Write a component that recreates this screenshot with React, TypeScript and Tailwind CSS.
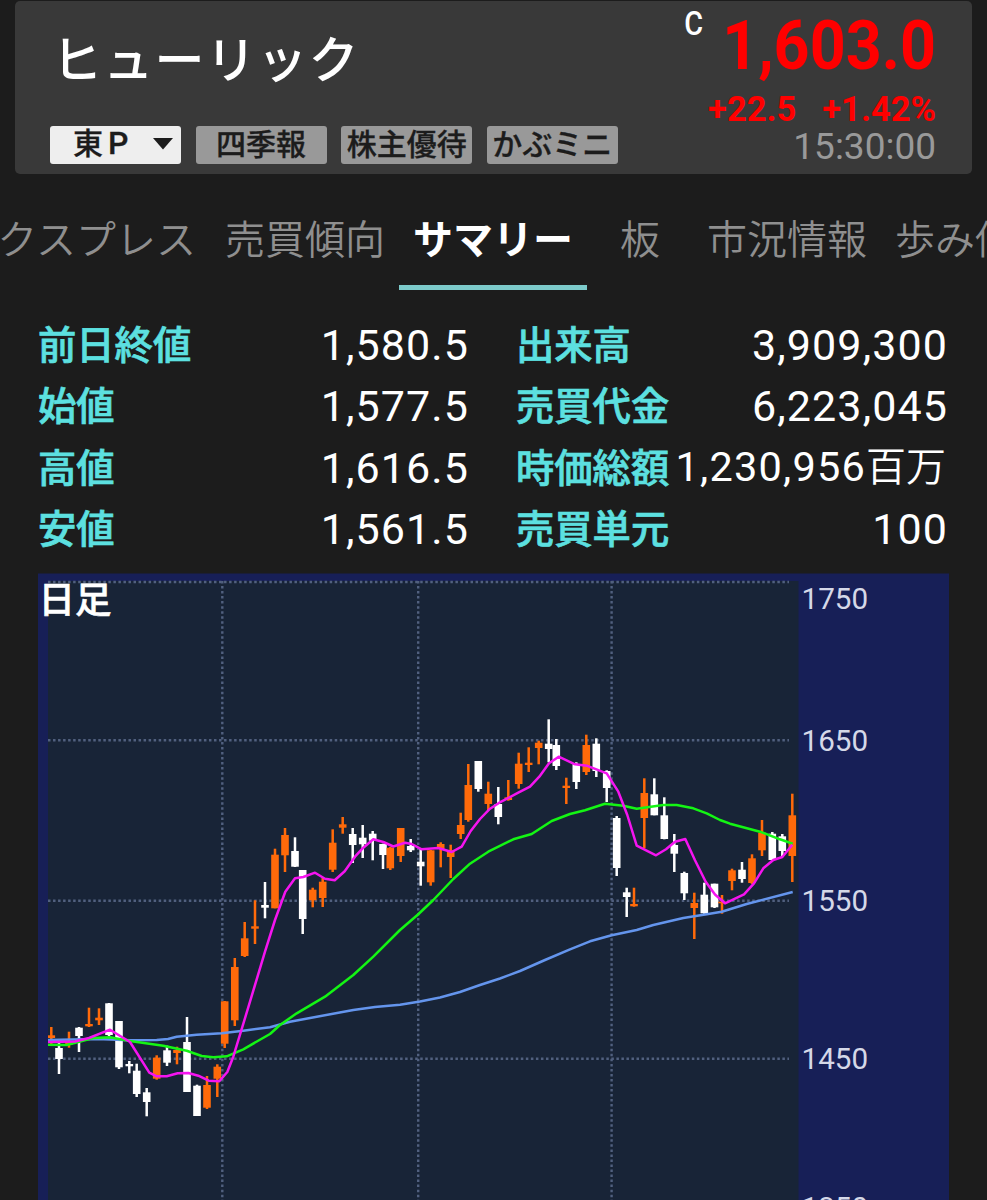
import { clsx } from "clsx";

const exchangeButtons = ["四季報", "株主優待", "かぶミニ"];

const tabs = [
  { name: "売買傾向", width: "w-[188px]" },
  { name: "サマリー", width: "w-[188px]", active: true },
  { name: "板", width: "w-[106px]" },
  { name: "市況情報", width: "w-[188px]" },
  { name: "歩み値", width: "w-[148px]" },
];

const priceRows = [
  { label: "前日終値", value: "1,580.5" },
  { label: "始値", value: "1,577.5" },
  { label: "高値", value: "1,616.5" },
  { label: "安値", value: "1,561.5" },
];

const volumeRows = [
  { label: "出来高", value: "3,909,300" },
  { label: "売買代金", value: "6,223,045" },
  { label: "時価総額", value: "1,230,956", unit: "百万" },
  { label: "売買単元", value: "100" },
];

type Candle = [x: number, high: number, low: number, top: number, bottom: number, up: 0 | 1];

const candles: Candle[] = [
  [51.3, 1027, 1046, 1035.3, 1038, 1],
  [59, 1042.3, 1074, 1048, 1059, 0],
  [69, 1031.7, 1047.7, 1042, 1044.7, 1],
  [79, 1027, 1052, 1027.7, 1036, 0],
  [89, 1007.7, 1027, 1024, 1026.3, 1],
  [99, 1008.3, 1025, 1017.7, 1020.3, 1],
  [109, 1003, 1036, 1003.3, 1035, 0],
  [119, 1021, 1069, 1021, 1067.3, 0],
  [129.3, 1061, 1073.3, 1064, 1066.3, 0],
  [136.7, 1063.7, 1097, 1070.7, 1094, 0],
  [146.7, 1088, 1116.3, 1092.3, 1102, 0],
  [156.7, 1055.3, 1079.7, 1057.7, 1078.7, 1],
  [167, 1045.7, 1066, 1050.3, 1062.7, 0],
  [177, 1046.7, 1064.3, 1050, 1053, 1],
  [187, 1017, 1092, 1042, 1092, 0],
  [197, 1084.7, 1116, 1085.7, 1116, 0],
  [207, 1076, 1109, 1085, 1107.7, 1],
  [217.3, 1064.3, 1097, 1066.7, 1078.7, 1],
  [224.7, 1001, 1048, 1001.3, 1043.7, 1],
  [234.8, 958, 1026, 967, 1020.3, 1],
  [244.7, 922, 957, 938.3, 956, 1],
  [255, 900.3, 944, 926.3, 928.7, 1],
  [265, 882, 918.3, 905, 907.7, 0],
  [275, 848.7, 908.3, 854.7, 908.3, 1],
  [285, 828, 872, 835, 855.3, 1],
  [295, 837.3, 867, 851, 866.7, 0],
  [302.7, 870, 934, 870, 919, 0],
  [312.7, 887.7, 907.3, 889.7, 900.3, 1],
  [322.7, 878, 907, 881.7, 898, 1],
  [332.7, 829.3, 872, 842.7, 869.7, 1],
  [342.7, 817, 833.7, 824.3, 827.7, 1],
  [352.7, 828, 863, 834, 845, 0],
  [362.7, 825, 858, 837.7, 844.3, 0],
  [372.7, 831, 860.3, 833.7, 840.7, 0],
  [383, 843.7, 869, 844, 855, 0],
  [390.3, 847, 870, 847.7, 868.3, 1],
  [400.7, 828, 862, 828, 856, 1],
  [410.7, 839, 852, 846, 850.3, 0],
  [420.7, 849, 885.7, 861.7, 866.3, 0],
  [430.7, 850, 885.7, 850.3, 882.3, 1],
  [440.7, 842.3, 867.3, 844, 849, 1],
  [450.7, 844.7, 878, 850.3, 857, 1],
  [460.7, 812.7, 839, 825, 834, 1],
  [468.3, 764, 821.7, 785, 820, 1],
  [478.3, 761, 791.7, 761, 789, 0],
  [488.3, 781.7, 810, 793.7, 804, 1],
  [498.3, 787, 824.3, 804, 817, 0],
  [508.3, 780, 800.7, 797.3, 800, 1],
  [518.7, 752.7, 788.7, 763.7, 784, 1],
  [528.7, 747.3, 772, 762.7, 765, 1],
  [538.7, 740.7, 764.3, 742.7, 748, 1],
  [548.7, 719.3, 762.3, 743.7, 749, 0],
  [556.3, 739, 770, 745, 766, 0],
  [566.3, 777.7, 804, 785.7, 788, 1],
  [576.3, 762.3, 789, 764.3, 782, 0],
  [586.3, 734.7, 775, 745, 772, 1],
  [596.3, 738.3, 777, 743.7, 771, 0],
  [606.7, 770.3, 802, 771, 788, 0],
  [616.7, 816, 876, 818, 868, 0],
  [626.7, 887.7, 917, 892.3, 897, 0],
  [634, 887.7, 906.7, 904, 906.3, 1],
  [644.3, 778.3, 848.3, 793, 818, 1],
  [654.3, 778.3, 815.3, 794.3, 815.3, 0],
  [664.3, 797.3, 839.3, 815.3, 839, 0],
  [674.3, 834, 872, 845, 853.7, 0],
  [684.3, 871.7, 900, 873, 893.3, 0],
  [694.3, 892.7, 939, 903, 908, 1],
  [704.3, 882.7, 913.7, 894.7, 913.3, 0],
  [714.5, 883.7, 908, 883.7, 907.3, 0],
  [722, 895, 913.7, 901.7, 903.3, 1],
  [732, 868.7, 890.3, 870.3, 881, 1],
  [742, 862, 882.7, 869.7, 879, 0],
  [752, 854.3, 884, 858.3, 883, 1],
  [762, 820, 856, 832.7, 850.3, 1],
  [772.3, 832, 860, 833.7, 860, 0],
  [782.3, 834, 856, 836.3, 851, 0],
  [792.3, 793.7, 882, 815.3, 856, 1],
];

// moving averages, long to short
const averages = [
  {
    color: "#6495ed",
    points:
      "48,1040 97,1039 130,1040.3 156.7,1040 168,1039 176.7,1036.7 196.7,1034.7 221.7,1033.3 243.3,1030.7 270,1027.3 290,1021.7 353.3,1010 375,1007 400,1004.7 420,1001.5 440,997.5 460,992 480,985 500,978.5 520,971 545,960 570,949.3 590,941.3 611.7,935.3 636.7,930 653.3,925 683.3,918 706.7,914.3 721.7,911.7 746.7,904 792.7,892",
  },
  {
    color: "#14f514",
    points:
      "48,1044.7 66.7,1045 78.3,1042 93.3,1038 110,1037.3 130,1041 163.3,1045.7 186.7,1050.7 201.7,1056 213.3,1057.3 226.7,1056.3 243.3,1049.3 270,1034 280,1025 296.7,1013.3 325,996.7 353.3,975 373.3,956.7 400,930 418,914.5 433.3,900 453.3,879 470,863.7 488.3,851.7 513.3,839.3 531.7,834 551.7,821 570,814 585,810.3 605,803.7 623.3,805.7 636.7,808.7 663.3,805 676.7,805 693.3,808.3 706.7,813.3 720,820 730,823.7 760,831.7 780,839.3 792.7,843.7",
  },
  {
    color: "#f514f0",
    points:
      "48,1042 75,1041.5 89,1038 110,1029.7 130,1042 149.3,1072.7 156.7,1076.3 166.7,1076.3 177.7,1073.3 188.3,1073 198.3,1075.7 208.7,1080.7 219.3,1081.3 227.3,1072 233.3,1056.7 250,1001.7 265,951.7 275,920 285.3,891.7 295,878.3 303.3,877 315,872.7 325,878.7 334.7,880.3 344.7,871.3 355,856.7 363.3,847.7 373.3,839.3 383.3,842 393.3,846.5 405,842.7 411.7,844 421.7,849.3 438.3,848 451.7,852 461.7,846.7 470.7,831 480,819 489.3,809.3 499.3,802.7 518.3,792.7 530,786.7 539.3,776.7 549,763.3 558.7,756.7 575,764.3 586.7,765.7 606.7,773.3 618.3,791.7 627.3,815 636.7,845.7 656,855.3 666,849.3 675,841.7 685.3,839 695,860.3 705.7,881.7 715,894.5 725,903.3 744,894.3 754,883.3 763.3,868.3 773.3,860 782.3,857 792.3,844.7",
  },
];

const priceScale = [
  { price: "1750", line: 582, baseline: 609.3 },
  { price: "1650", line: 740.2, baseline: 750.6 },
  { price: "1550", line: 900.7, baseline: 911.2 },
  { price: "1450", line: 1058.8, baseline: 1069.3 },
  { price: "1350", line: 1217, baseline: 1217.5 },
];

const monthLines = [222.3, 418.2, 611.6];

function StockHeader() {
  return (
    <header className="mx-[15px] mt-px flex h-[173px] justify-between rounded-[5px] bg-[#393939] pr-9 pl-[35px]">
      <div className="flex flex-col">
        <h1 className="mt-[32px] ml-[2px] h-[56px] text-[50px] leading-[56px] font-medium tracking-[1.3px] whitespace-nowrap text-white">
          ヒューリック
        </h1>
        <div className="mt-[37px] flex gap-[14.6px] text-[30px] leading-[37px] font-medium text-[#1c1c1c] [-webkit-text-stroke:0.3px_#1c1c1c]">
          <button className="flex h-[38px] w-[131px] items-start justify-between rounded-[3px] bg-[#eeeeee] pr-2 pl-[23px]">
            <span className="-mt-px">
              東<span className="ml-[5px] text-[32px]">P</span>
            </span>
            <svg width="20" height="12" viewBox="0 0 20 12" className="mt-3">
              <path d="M0 0h20L10 11.5z" fill="#1c1c1c" />
            </svg>
          </button>
          {exchangeButtons.map((name) => (
            <button key={name} className="flex h-[38px] w-[131px] items-start justify-center rounded-[3px] bg-[#999999] whitespace-nowrap">
              {name}
            </button>
          ))}
        </div>
      </div>

      <div className="flex flex-col items-end whitespace-nowrap text-[#ff0000]">
        <div className="mt-[5px] flex h-[80px] items-start">
          <span className="-mr-[2px] origin-right scale-x-85 text-[34px] leading-[34px] font-medium text-white">C</span>
          <span className="origin-right scale-x-91 text-[69px] leading-[80px] font-bold">1,603.0</span>
        </div>
        <div className="mt-[4px] flex h-[36px] gap-[26px] text-[34.5px] leading-[38px] font-bold">
          <span>+22.5</span>
          <span>+1.42%</span>
        </div>
        <span className="text-[37px] leading-[41px] text-[#999999]">15:30:00</span>
      </div>
    </header>
  );
}

function TabBar() {
  return (
    <nav className="mt-[26px] flex h-[90px] overflow-hidden text-[40px] leading-[81px] font-[350] whitespace-nowrap text-[#8f8f8f]">
      <div className="flex w-[211px] shrink-0 justify-end overflow-hidden pr-[15px]">エクスプレス</div>
      {tabs.map((tab) => (
        <div
          key={tab.name}
          className={clsx(
            "flex shrink-0 justify-center",
            tab.width,
            tab.active && "border-b-[5px] border-[#7ccaca] font-bold text-white"
          )}
        >
          {tab.name}
        </div>
      ))}
    </nav>
  );
}

function SummaryColumn({ rows }: { rows: { label: string; value: string; unit?: string }[] }) {
  return (
    <dl>
      {rows.map((row) => (
        <div key={row.label} className="flex h-[61.5px] items-center justify-between whitespace-nowrap">
          <dt className="pt-[2px] text-[38.3px] leading-[58px] font-medium text-[#5ce0e0] [-webkit-text-stroke:0.7px_#5ce0e0]">
            {row.label}
          </dt>
          <dd
            className={clsx(
              "-mr-[2px] leading-[60px] text-white",
              row.unit ? "text-[41.5px] tracking-[1.2px]" : "text-[43px] tracking-[1.1px]"
            )}
          >
            {row.value}
            {row.unit && <span className="mr-[2px] text-[40px] font-[350] tracking-normal">{row.unit}</span>}
          </dd>
        </div>
      ))}
    </dl>
  );
}

function DailyChart() {
  return (
    <svg width="911" height="627" viewBox="38 573 911 627" className="ml-[38px] block">
      <rect x="38" y="573.5" width="911" height="627" fill="#171f57" />
      <rect x="48" y="581" width="750.5" height="620" fill="#182437" />

      <g stroke="#51607f" strokeWidth="2.4" strokeDasharray="2.5 2.53">
        {priceScale.map((row) => (
          <line key={row.price} x1="48" x2="789" y1={row.line} y2={row.line} />
        ))}
        {monthLines.map((x) => (
          <line key={x} x1={x} x2={x} y1="581" y2="1200" />
        ))}
      </g>

      {candles.map(([x, high, low, top, bottom, up]) => {
        const left = Math.max(48, x - 3.8);
        return (
          <g key={x} fill={up ? "#ff6a0a" : "#ffffff"}>
            <rect x={x - 1.25} y={high} width="2.5" height={low - high} />
            <rect x={left} y={top} width={x + 3.8 - left} height={bottom - top} />
          </g>
        );
      })}

      {averages.map((line) => (
        <polyline key={line.color} points={line.points} fill="none" stroke={line.color} strokeWidth="2.5" strokeLinejoin="round" />
      ))}

      <text x="38.5" y="613" fontSize="36.5" fontWeight="500" fill="#ffffff" stroke="#ffffff" strokeWidth="0.6">日足</text>
      {priceScale.map((row) => (
        <text key={row.price} x="801.5" y={row.baseline} fontSize="29.6" fill="#d5d8e8">
          {row.price}
        </text>
      ))}
    </svg>
  );
}

export default function App() {
  return (
    <div className="flex h-[1200px] w-[987px] flex-col overflow-hidden bg-[#1c1c1c] font-['Roboto','Noto_Sans_CJK_JP',sans-serif]">
      <StockHeader />
      <TabBar />
      <main className="mt-[24px]">
        <section className="grid h-[259px] grid-cols-[429px_430px] gap-[49px] pl-[38px]">
          <SummaryColumn rows={priceRows} />
          <SummaryColumn rows={volumeRows} />
        </section>
        <DailyChart />
      </main>
    </div>
  );
}
